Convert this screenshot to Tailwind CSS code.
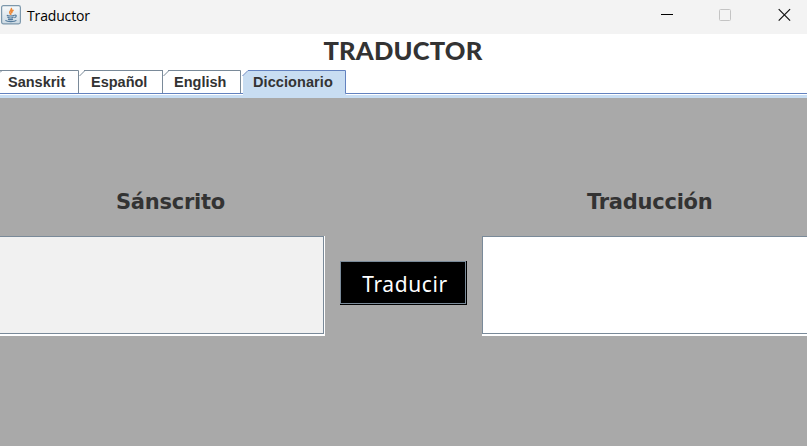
<!DOCTYPE html>
<html lang="es">
<head>
<meta charset="utf-8">
<title>Traductor</title>
<script src="https://cdn.jsdelivr.net/npm/@tailwindcss/browser@4"></script>
</head>
<body class="w-[807px] h-[446px] overflow-hidden bg-[#a9a9a9] flex flex-col text-[#333333]">
<header class="h-[34px] shrink-0 bg-[#f3f3f3] flex items-start justify-between">
  <div class="flex items-start pl-px pt-[5px]">
    <svg class="w-5 h-5" viewBox="0 0 20 20" fill="none">
      <defs><linearGradient id="g" x1="0" y1="0" x2="0" y2="1"><stop stop-color="#f8fafb"/><stop offset="1" stop-color="#cbd9e3"/></linearGradient></defs>
      <rect x=".6" y=".6" width="18.8" height="18.3" rx="1.8" fill="url(#g)" stroke="#7d98ac" stroke-width="1.2"/>
      <path d="M10.2 3c1.7 2-2.8 3-1.2 5.2.5.7.9 1.1.7 1.8M12.5 5c-2 1.3-2.3 2-1.4 3.2" stroke="#ec8736" stroke-width="1.6"/>
      <path d="M5.8 10.4c1.6.8 5.7.8 7.5 0M6.4 12.3c1.8.8 4.5.8 6.2 0M7 14.1c1.5.6 3.5.6 5 0M4.4 15.4c1.7 1.6 9 1.7 11 0M13.4 10.3c2.6-.8 2.3 2-.1 2.4" stroke="#537a9c" stroke-width="1.2"/>
    </svg>
    <span class="ml-[6px] mt-px text-[14px] leading-5 tracking-[-0.15px] text-black font-['Open_Sans','Noto_Sans',sans-serif]">Traductor</span>
  </div>
  <div class="flex items-start pt-[8px] pr-[16px] gap-[46px]">
    <svg class="w-3 h-[14px] -ml-px mr-px" viewBox="0 0 12 14"><path d="M0 6.5h12" stroke="#000"/></svg>
    <svg class="w-3 h-[14px] -ml-px mr-px" viewBox="0 0 12 14" fill="none"><rect x=".5" y="1.5" width="11" height="11" rx="1" stroke="#c4c4c4"/></svg>
    <svg class="w-[13px] h-[14px]" viewBox="0 0 13 14"><path d="M.7 1.2l11.4 11.4M12.1 1.2L.7 12.6" stroke="#111" stroke-width="1.2"/></svg>
  </div>
</header>
<div class="h-9 shrink-0 bg-white flex justify-center">
  <h1 class="h-[34px] leading-[33px] whitespace-nowrap text-[25.5px] font-black tracking-[0.2px] pr-px font-['Lato','Open_Sans',sans-serif]">TRADUCTOR</h1>
</div>
<nav class="h-7 shrink-0 bg-white relative text-[14.5px] leading-[24px] font-bold font-['Liberation_Sans',Arial,sans-serif]">
  <svg class="absolute inset-0 w-[807px] h-7" viewBox="0 0 807 28" fill="none">
    <path d="M0 25h807v3H0z" fill="#c8ddf2"/>
    <path d="M0 .5H78.5V23M84 .5H162M162.5 0V23M168 .5H240.5V23" stroke="#7a8a99"/>
    <path d="M79.5 6L84.5 1M163.5 6L168.5 1M0 2.5L1.5 1" stroke="#7a8a99"/>
    <path d="M0 23.5H807" stroke="#6382bf"/>
    <path d="M243 28V6L248 1H346V25H807V28z" fill="#c8ddf2"/>
    <path d="M242.5 6L248 .5H345.5V23.5H807" stroke="#6382bf"/>
    <path d="M346 24.5H807M0 24.5H242" stroke="#fff"/>
  </svg>
  <div class="relative flex">
    <span class="w-[79px] pl-2">Sanskrit</span>
    <span class="w-[84px] pl-3">Español</span>
    <span class="w-[79px] pl-[11px]">English</span>
    <span class="w-[105px] pl-[11px] tracking-[0.08px]">Diccionario</span>
  </div>
</nav>
<main class="flex flex-col">
  <div class="h-[138px] pt-[91px] flex text-[21px] leading-[26px] font-bold tracking-[-0.25px] font-['DejaVu_Sans','Noto_Sans',sans-serif]">
    <h2 class="w-[471px] pl-[116px]">Sánscrito</h2>
    <h2 class="pl-[116px]">Traducción</h2>
  </div>
  <div class="flex">
    <div class="w-[325px] h-[100px] bg-[#f1f1f1] border-r border-b-2 border-white"><div class="h-[98px] border-t border-r border-b border-[#7a8a99]"></div></div>
    <button class="ml-[15px] mt-[25px] w-[127px] h-[44px] bg-black p-0 pr-px pb-px text-white text-[21px] tracking-[0.6px] font-['Noto_Sans','Open_Sans',sans-serif]"><span class="flex h-[43px] border border-[#7a8a99] items-center justify-center pt-[4px] pl-[4px]">Traducir</span></button>
    <div class="ml-[15px] w-[325px] h-[100px] bg-white border-b-2 border-white"><div class="h-[98px] border-t border-l border-b border-[#7a8a99]"></div></div>
  </div>
</main>
</body>
</html>
